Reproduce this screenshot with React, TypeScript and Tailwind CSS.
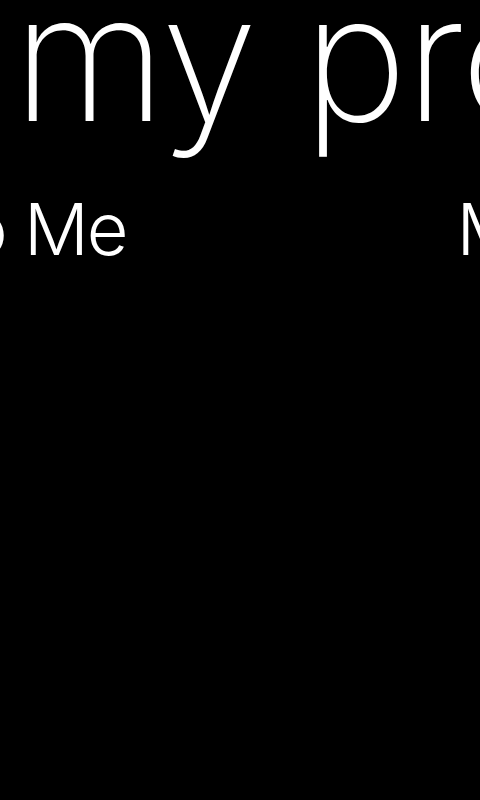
export default function App() {
  return (
    <div className="w-[480px] h-[800px] bg-black overflow-hidden text-white" style={{ fontFamily: "Inter, 'Open Sans', sans-serif" }}>
      <div className="whitespace-nowrap text-[176px] font-extralight leading-none tracking-[-2px] ml-[13px] mt-[-31px]">
        my profile
      </div>
      <div className="flex whitespace-nowrap text-[72px] font-light leading-none tracking-[-2px] mt-[48px] ml-[-35px] gap-[330px]">
        <span>o Me</span>
        <span>My Friends</span>
      </div>
    </div>
  );
}
